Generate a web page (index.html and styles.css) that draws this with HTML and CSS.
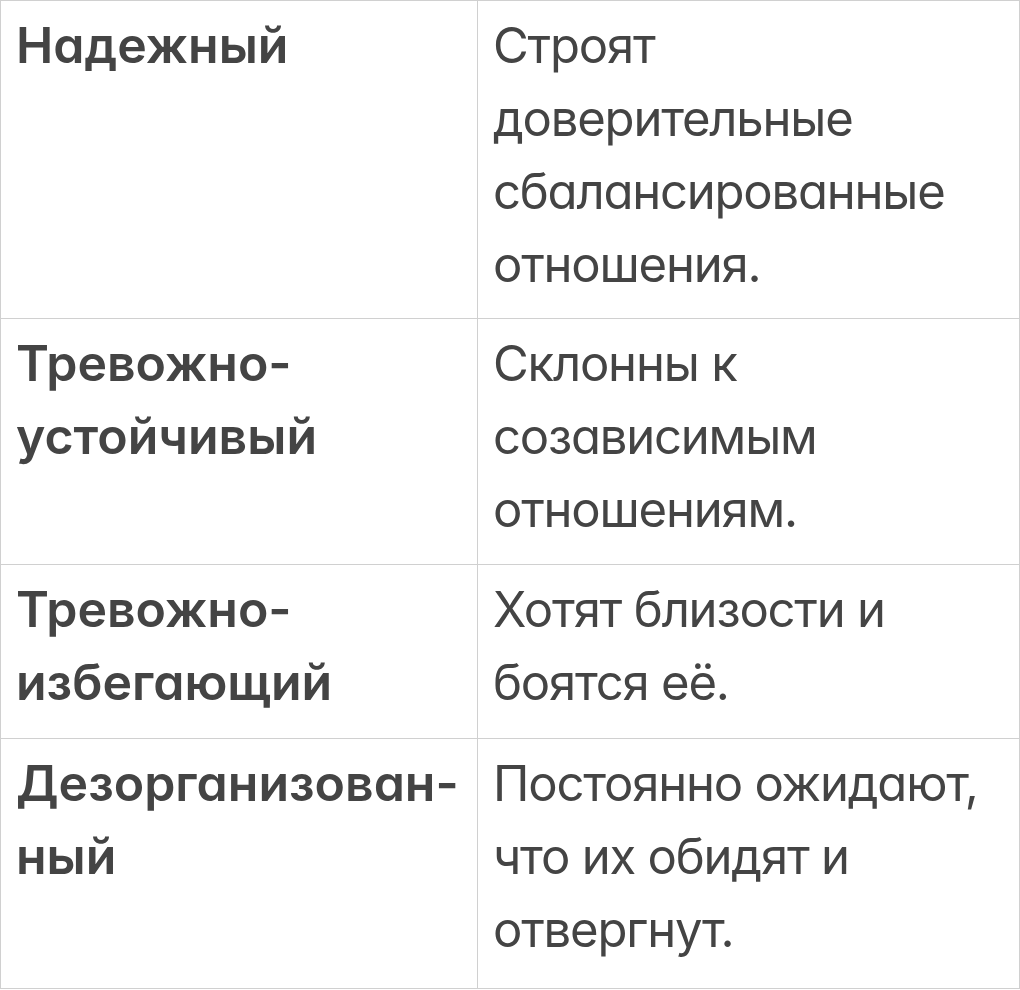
FILE: index.html
```html
<!DOCTYPE html>
<html lang="ru">
<head>
<meta charset="utf-8">
<link rel="stylesheet" href="styles.css">
</head>
<body>
<table class="types">
  <colgroup>
    <col class="col-name">
    <col class="col-desc">
  </colgroup>
  <tbody>
    <tr class="r1">
      <th class="name">Надежный</th>
      <td class="desc">Строят доверительные сбалансированные отношения.</td>
    </tr>
    <tr class="r2">
      <th class="name">Тревожно-<br>устойчивый</th>
      <td class="desc">Склонны к созависимым отношениям.</td>
    </tr>
    <tr class="r3">
      <th class="name">Тревожно-<br>избегающий</th>
      <td class="desc">Хотят близости и боятся её.</td>
    </tr>
    <tr class="r4">
      <th class="name">Дезорганизован-<br>ный</th>
      <td class="desc">Постоянно ожидают, что их обидят и отвергнут.</td>
    </tr>
  </tbody>
</table>
</body>
</html>
```

FILE: styles.css
```css
html, body {
  margin: 0;
  padding: 0;
  background: #ffffff;
}

.types {
  width: 1020px;
  table-layout: fixed;
  border-collapse: collapse;
  font-family: Inter, "Noto Sans", sans-serif;
  font-feature-settings: "cv11";
  font-size: 50px;
  line-height: 73px;
  color: #444444;
}

.col-name {
  width: 477px;
}

.types th,
.types td {
  border: 1px solid #d0d0d0;
  padding: 8px 6px 17px 15px;
  vertical-align: top;
  text-align: left;
}

.types .r2 th,
.types .r2 td {
  padding-bottom: 18px;
}

.types .r3 th,
.types .r3 td {
  padding-bottom: 19px;
}

.types .r4 th,
.types .r4 td {
  padding-bottom: 22px;
}

.name {
  font-weight: 600;
}

.desc {
  font-weight: 400;
  font-size: 49px;
  letter-spacing: -1.2px;
}
```
